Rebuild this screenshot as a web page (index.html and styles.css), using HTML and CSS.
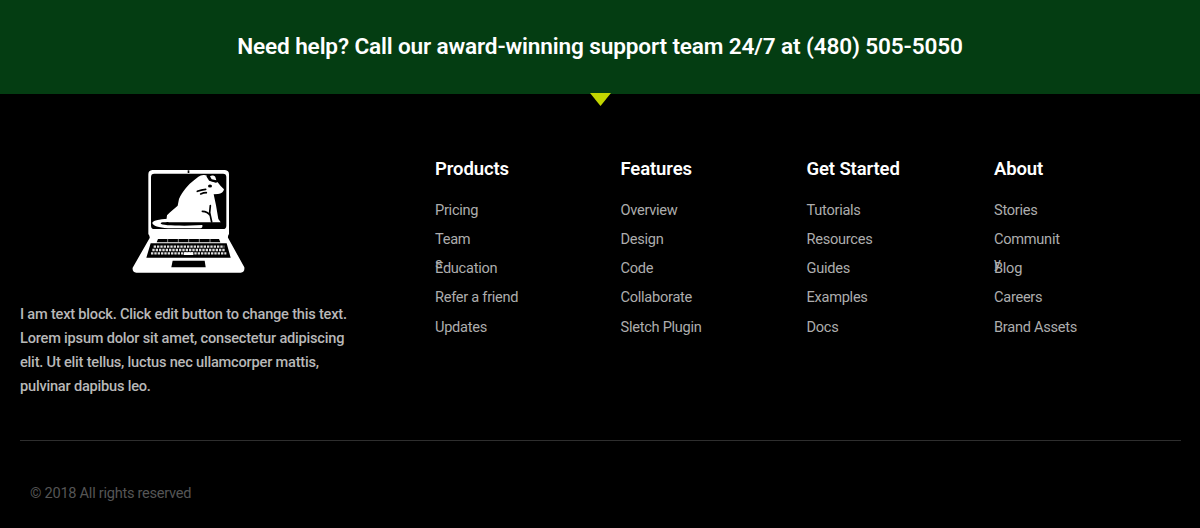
FILE: index.html
```html
<!DOCTYPE html>
<html lang="en">
<head>
<meta charset="utf-8">
<title>Support and site links</title>
<link rel="stylesheet" href="styles.css">
</head>
<body>
<section class="help"><h2 class="help-title">Need help? Call our award-winning support team 24/7 at (480) 505-5050</h2><svg class="arrow" viewBox="0 0 21 13"><path d="M0 0H21L10.5 13Z"/></svg></section>
<footer class="footer">
  <div class="main">
    <div class="brand">
      <svg class="logo" viewBox="0 0 390 360" role="img" aria-label="Mouse on a laptop">
        <path class="w" d="M82 30H300Q312 31 312 43V222Q308 227 309 233L358 322Q360 337 347 338H34Q21 337 23 323L74 234Q75 229 70 222V43Q70 31 82 30Z"/>
        <rect class="k" x="78" y="41" width="226" height="166" rx="10"/>
        <rect class="k" x="188" y="31" width="5" height="8"/>
        <path class="w" d="M235 45C241 44 246 46 249 51C251 55 252 58 254 60L260 64L278 67L287 78L297 88C296 96 289 101 279 102L266 103L273 136L280 177L287 187H131L124 182L126 166C137 154 150 145 158 137L162 117C173 94 190 73 207 61C216 53 224 46 235 45Z"/>
        <path class="w" d="M255 49C260 45 268 46 271 51L274 61L260 58Z"/>
        <path class="kl" d="M247 49L254 60L273 66M217 94Q229 89 242 88M227 102Q236 98 244 98M256 137L254 158L260 186M232 154Q248 154 256 167"/>
        <ellipse class="k" cx="255" cy="78" rx="6" ry="4.5"/>
        <path class="w" d="M130 176C101 177 82 182 82 189C83 197 101 203 129 205H226Q234 204 232 195L178 197C137 197 108 196 107 190C109 185 120 187 140 186Z"/>
        <path class="k" d="M99 237H282L286 247H95ZM77 250H305L317 293H64Z"/>
        <path class="thin" d="M128 236V248M160 236V248M191 236V248M223 236V248M255 236V248"/>
        <path class="keys" d="M86 260H298M82 270H301M78 280H304"/>
        <path class="w" d="M177 277H204L205 285H176Z"/>
        <path class="k" d="M143 302H239L242 322H139Z"/>
      </svg>
      <p class="blurb">I am text block. Click edit button to change this text.<br>Lorem ipsum dolor sit amet, consectetur adipiscing<br>elit. Ut elit tellus, luctus nec ullamcorper mattis,<br>pulvinar dapibus leo.</p>
    </div>
    <nav class="menus">
      <div class="menu"><h3 class="menu-title">Products</h3><ul class="links"><li>Pricing</li><li>Team<br>s</li><li>Education</li><li>Refer a friend</li><li>Updates</li></ul></div>
      <div class="menu"><h3 class="menu-title">Features</h3><ul class="links"><li>Overview</li><li>Design</li><li>Code</li><li>Collaborate</li><li>Sletch Plugin</li></ul></div>
      <div class="menu"><h3 class="menu-title">Get Started</h3><ul class="links"><li>Tutorials</li><li>Resources</li><li>Guides</li><li>Examples</li><li>Docs</li></ul></div>
      <div class="menu"><h3 class="menu-title">About</h3><ul class="links"><li>Stories</li><li>Communit<br>y</li><li>Blog</li><li>Careers</li><li>Brand Assets</li></ul></div>
    </nav>
  </div>
  <p class="copyright">© 2018 All rights reserved</p>
</footer>
</body>
</html>
```
FILE: styles.css
```css
* { box-sizing: border-box; margin: 0; padding: 0; }
body { background: #000; font-family: Roboto, sans-serif; height: 528px; overflow: hidden; }
.help { background: #043d12; height: 93.5px; position: relative; text-align: center; }
.help-title { color: #fff; font-size: 22.6px; font-weight: 600; letter-spacing: -0.14px; line-height: 30px; padding-top: 32px; white-space: nowrap; }
.arrow { position: absolute; left: 590px; top: 92.5px; width: 21px; height: 13px; fill: #c2d500; }
.footer { padding: 0 19px 0 20px; }
.main { display: flex; height: 347px; border-bottom: 1px solid #2e2e2e; }
.brand { width: 415px; padding-top: 66.5px; }
.logo { display: block; width: 130px; height: 120px; margin-left: 105px; }
.w { fill: #fff; }
.k { fill: #000; }
.kl { fill: none; stroke: #000; stroke-width: 5; stroke-linecap: round; }
.thin { stroke: #ddd; stroke-width: 2; }
.keys { stroke: #ddd; stroke-width: 7; stroke-dasharray: 7 3; }
.blurb { color: #b8b8b8; font-size: 14.6px; font-weight: 500; letter-spacing: -0.21px; line-height: 24.2px; margin-top: 21.5px; white-space: nowrap; }
.menus { display: grid; grid-template-columns: 185.5px 186px 187.5px 160px; padding-top: 61px; }
.menu-title { color: #fff; font-size: 18.5px; font-weight: 600; letter-spacing: -0.12px; line-height: 28px; }
.links { list-style: none; color: #adadad; font-size: 14.6px; letter-spacing: -0.27px; line-height: 24.3px; padding-top: 15px; }
.links li { height: 24.3px; margin-bottom: 5px; white-space: nowrap; }
.copyright { color: #555; font-size: 14.6px; letter-spacing: -0.27px; line-height: 24px; padding: 40px 10px 0; }
```
